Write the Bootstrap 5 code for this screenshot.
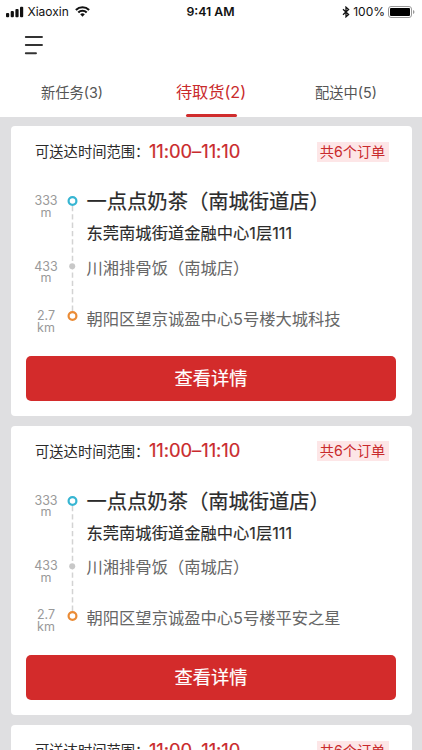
<!DOCTYPE html>
<html lang="zh-CN">
<head>
<meta charset="utf-8">
<meta name="viewport" content="width=device-width, initial-scale=1">
<title>待取货</title>
<link href="https://cdn.jsdelivr.net/npm/bootstrap@5.3.0/dist/css/bootstrap.min.css" rel="stylesheet">
<style>
body{font-family:Inter,"Noto Sans CJK SC",sans-serif;background:#dfdfe1;color:#2b2b2b;height:750px;line-height:1.2}
.status-bar{height:24px;font-size:12px;color:#111;padding:0 7px 0 6px}
.status-side{width:150px}
.status-bar svg{flex:none}
.carrier{margin:0 6.5px 0 3.5px}
.charge{margin:0 3px}
.clock{font-size:12.3px}
.menu-bar{height:45px;padding:11px 0 0 24px}
.tab-row{height:47.5px;font-size:14.3px;color:#555}
.tab-item{width:137px;color:#555;height:47.5px;line-height:48px}
.tab-item:not(.current){padding-right:4px}
.tab-item.current{color:#c92a2c;font-size:16.2px;line-height:47px;position:relative}
.tab-item.current::after{content:"";position:absolute;left:50%;bottom:0;width:51px;height:3px;margin-left:-25.5px;border-radius:2px;background:#d02c2d}
.task-list{padding:9.8px 10.5px 0;gap:9.9px}
.task{height:289.5px;border-radius:4px}
.task-head{height:50px;padding:1.5px 23px 0 24.5px}
.window-label{font-size:14.3px}
.window-time{font-size:18.4px;color:#c92a2c;letter-spacing:-.05px;margin-left:-.5px;padding-bottom:2px;-webkit-text-stroke:.2px}
.count-tag{width:72px;height:20px;line-height:20px;font-size:14.2px;color:#c92a2c;background:#fde6e7}
.route{height:179.5px;padding:9px 0 0 22px}
.dist{width:27px;font-size:12.5px;line-height:11.5px;color:#999}
.leg-a{height:65.5px}.leg-b{height:50.3px}.leg-c{height:35px}
.dist>div{padding-top:10px}
.dist>.leg-c{padding-top:9px}
.stop-name{font-size:20.3px;line-height:33px;-webkit-text-stroke:.2px}
.stop-text{font-size:16.3px;line-height:34px;color:#666}
.stop-addr{font-size:16.3px;line-height:30px;-webkit-text-stroke:.15px}
.stop-text.destination{padding-top:.7px}
.detail-btn{margin:0 15.5px;height:45px;border-radius:5px;background:#d32b2b;color:#fff;font-size:18.2px;line-height:45px;-webkit-text-stroke:.2px}
</style>
</head>
<body class="overflow-hidden">
<header class="bg-white">
  <div class="status-bar d-flex align-items-center justify-content-between">
    <div class="status-side d-flex align-items-center">
      <svg width="18" height="12" viewBox="0 0 18 12" fill="#111"><rect x="0" y="7" width="3.2" height="4.2" rx="1"/><rect x="4.7" y="5" width="3.2" height="6.2" rx="1"/><rect x="9.4" y="3" width="3.2" height="8.2" rx="1"/><rect x="14" y=".7" width="3.2" height="10.5" rx="1"/></svg>
      <span class="carrier">Xiaoxin</span>
      <svg width="15" height="11" viewBox="0 0 15 11" fill="none" stroke="#111" stroke-width="2.1"><path d="M.9 3.9a9.4 9.4 0 0 1 13.2 0M3.3 6.4a6 6 0 0 1 8.4 0"/><path d="M5.2 8.3a3.3 3.3 0 0 1 4.6 0L7.5 10.7z" fill="#111" stroke="none"/></svg>
    </div>
    <span class="clock fw-semibold">9:41 AM</span>
    <div class="status-side d-flex align-items-center justify-content-end">
      <svg width="8" height="12" viewBox="0 0 8 12" fill="none" stroke="#111" stroke-width="1.3"><path d="M1 3.3 6.6 8.4 4 10.8V1.2l2.6 2.4L1 8.7"/></svg>
      <span class="charge">100%</span>
      <svg width="27" height="12" viewBox="0 0 27 12"><rect x=".5" y=".5" width="23" height="11" rx="2.5" fill="none" stroke="#999"/><rect x="2" y="2" width="20" height="8" rx="1" fill="#000"/><path d="M25 4v4q1.5-.7 1.5-2T25 4" fill="#999"/></svg>
    </div>
  </div>
  <div class="menu-bar">
    <svg class="d-block" width="20" height="20" viewBox="0 0 20 20" stroke="#333" stroke-width="1.9" stroke-linecap="round"><path d="M1.8 2H18M1.8 10H18M1.8 18.2H12"/></svg>
  </div>
  <nav class="tab-row d-flex justify-content-center">
    <a class="tab-item text-center text-decoration-none" href="#">新任务(3)</a>
    <a class="tab-item current text-center text-decoration-none" href="#">待取货(2)</a>
    <a class="tab-item text-center text-decoration-none" href="#">配送中(5)</a>
  </nav>
</header>
<main class="task-list d-flex flex-column" id="tasks"></main>
<template id="task-template">
  <article class="task bg-white flex-shrink-0">
    <div class="task-head d-flex align-items-center">
      <span class="window-label">可送达时间范围：</span>
      <span class="window-time">11:00–11:10</span>
      <span class="count-tag ms-auto text-center">共6个订单</span>
    </div>
    <div class="route d-flex">
      <div class="dist text-center">
        <div class="leg-a">333<br>m</div><div class="leg-b">433<br>m</div><div class="leg-c">2.7<br>km</div>
      </div>
      <svg class="flex-shrink-0" width="27" height="140" viewBox="0 0 27 140" fill="none"><path d="M12.5 21V126" stroke="#d3d3d3" stroke-width="1.5" stroke-dasharray="5.3 3"/><circle cx="12.5" cy="16" r="3.9" fill="#fff" stroke="#36b5d2" stroke-width="2.2"/><circle cx="12.2" cy="81.3" r="3" fill="#c8c8c8"/><circle cx="12.5" cy="131" r="3.9" fill="#fff" stroke="#ea8b35" stroke-width="2.2"/></svg>
      <div class="text-nowrap">
        <div class="leg-a"><div class="stop-name">一点点奶茶（南城街道店）</div><div class="stop-addr">东莞南城街道金融中心1层111</div></div>
        <div class="leg-b stop-text">川湘排骨饭（南城店）</div>
        <div class="leg-c stop-text destination"></div>
      </div>
    </div>
    <a class="detail-btn d-block text-center text-decoration-none" href="#">查看详情</a>
  </article>
</template>
<script src="https://cdn.jsdelivr.net/npm/bootstrap@5.3.0/dist/js/bootstrap.bundle.min.js"></script>
<script>
['朝阳区望京诚盈中心5号楼大城科技','朝阳区望京诚盈中心5号楼平安之星','朝阳区望京诚盈中心5号楼大城科技'].forEach(function(d){
  var n=document.getElementById('task-template').content.cloneNode(true);
  n.querySelector('.destination').textContent=d;
  document.getElementById('tasks').appendChild(n);
});
</script>
</body>
</html>
